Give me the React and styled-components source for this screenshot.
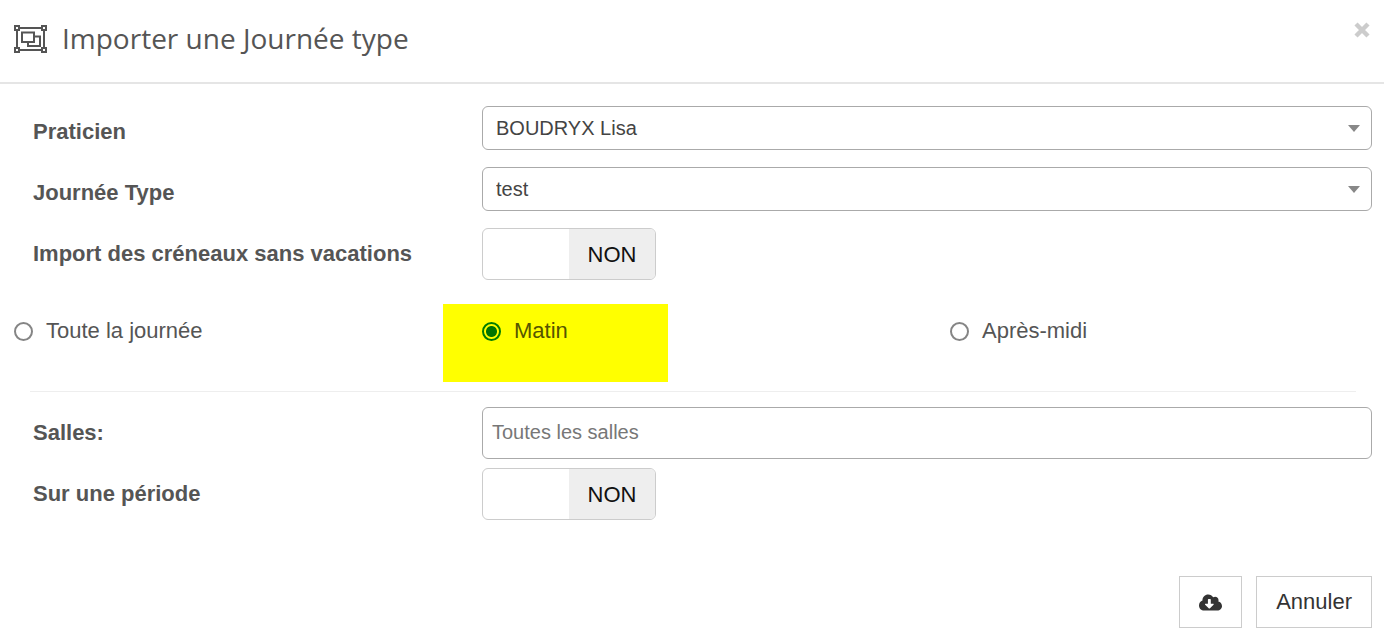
import React, { useState } from "react";
import styled, { createGlobalStyle } from "styled-components";
import { FaCloudDownloadAlt } from "react-icons/fa";

const GlobalStyle = createGlobalStyle`
  *, *::before, *::after { box-sizing: border-box; }
  body {
    margin: 0;
    background: #fff;
    color: #555;
    font: 22px/24px "Liberation Sans", Arial, sans-serif;
  }
  button, input, select { font-family: inherit; }
`;

const Header = styled.header`
  display: flex;
  align-items: flex-start;
  justify-content: space-between;
  padding: 18px 12px 24px 14px;
  border-bottom: 2px solid #e5e5e5;
`;

const Title = styled.h1`
  display: flex;
  align-items: center;
  gap: 15px;
  margin: 0;
  font: 400 28px/40px "Open Sans", sans-serif;

  svg { margin-top: 2px; }
`;

const CloseButton = styled.button`
  display: flex;
  padding: 4px 2px;
  border: 0;
  background: none;
  color: #ccc;
  cursor: pointer;
`;

const Form = styled.form`
  padding: 22px 12px 12px 14px;
`;

const Row = styled.div`
  display: grid;
  grid-template-columns: 468fr 890fr;
  align-items: start;
  margin-bottom: ${(p) => p.$gap}px;
`;

const Label = styled.label`
  padding: 14px 0 0 19px;
  font-weight: 700;
`;

const SelectWrap = styled.div`
  position: relative;

  svg {
    position: absolute;
    top: 19px;
    right: 12px;
    pointer-events: none;
  }
`;

const Select = styled.select`
  display: block;
  appearance: none;
  width: 100%;
  height: 44px;
  padding: 0 36px 0 13px;
  border: 1px solid #aaa;
  border-radius: 6px;
  background: #fff;
  color: #444;
  font-size: 20px;
`;

const TextInput = styled.input`
  width: 100%;
  height: 52px;
  padding: 0 9px 2px;
  border: 1px solid #aaa;
  border-radius: 6px;
  background: #fff;
  color: #444;
  font-size: 20px;

  &::placeholder { color: #777; }
`;

const Switch = styled.label`
  position: relative;
  display: grid;
  grid-template-columns: 1fr 1fr;
  width: 174px;
  height: 52px;
  overflow: hidden;
  border: 1px solid #ccc;
  border-radius: 6px;
  color: #111;
  line-height: 52px;
  text-align: center;
  cursor: pointer;

  input {
    position: absolute;
    inset: 0;
    margin: 0;
    opacity: 0;
  }
`;

const SwitchText = styled.span`
  grid-column: ${(p) => (p.$on ? 1 : 2)};
  background: #eee;
`;

const RadioGroup = styled.div`
  display: grid;
  grid-template-columns: 468fr 468fr 422fr;
`;

const RadioOption = styled.label`
  display: flex;
  align-items: flex-start;
  gap: 13px;
  height: 78px;
  padding-top: 15px;

  &:has(input:checked) {
    width: 225px;
    margin-left: -39px;
    padding-left: 39px;
    background: #ff0;
    color: #550;
  }
`;

const Radio = styled.input`
  appearance: none;
  width: 19px;
  height: 19px;
  margin: 3px 0 0;
  border: 2px solid #858585;
  border-radius: 50%;

  &:checked {
    border-color: #007d00;
    background: radial-gradient(circle, #007500 5px, transparent 6px);
  }
`;

const Divider = styled.hr`
  margin: 9px 16px 15px;
  border: 0;
  border-top: 1px solid #eee;
`;

const Footer = styled.footer`
  display: flex;
  justify-content: flex-end;
  gap: 14px;
  margin-top: 56px;
`;

const Button = styled.button`
  display: flex;
  align-items: center;
  justify-content: center;
  height: 52px;
  padding: 0 19px;
  border: 1px solid #ccc;
  background: #fff;
  color: #333;
  font-size: 22px;
  cursor: pointer;
`;

function ObjectGroupIcon() {
  return (
    <svg width="33" height="28" viewBox="0 0 33 28" fill="none" stroke="currentColor" strokeWidth="2" aria-hidden="true">
      <path d="M6 3H27M6 25H27M3 6V22M30 6V22" />
      <path d="M1 1H5V5H1ZM28 1H32V5H28ZM1 23H5V27H1ZM28 23H32V27H28Z" />
      <path d="M8 7.5H20V17H8ZM20 11.5H26V21H14V17" />
    </svg>
  );
}

function CrossIcon() {
  return (
    <svg width="16" height="16" viewBox="0 0 16 16" stroke="currentColor" strokeWidth="4.4" aria-hidden="true">
      <path d="M2 2L14 14M14 2L2 14" />
    </svg>
  );
}

function SelectField({ id, label, value }) {
  return (
    <Row $gap={17}>
      <Label htmlFor={id}>{label}</Label>
      <SelectWrap>
        <Select id={id} defaultValue={value}>
          <option>{value}</option>
        </Select>
        <svg width="12" height="7" viewBox="0 0 12 7" aria-hidden="true">
          <path d="M0 0H12L6 7Z" fill="#888" />
        </svg>
      </SelectWrap>
    </Row>
  );
}

function SwitchField({ id, label, gap }) {
  const [on, setOn] = useState(false);
  return (
    <Row $gap={gap}>
      <Label htmlFor={id}>{label}</Label>
      <Switch>
        <input id={id} type="checkbox" checked={on} onChange={() => setOn(!on)} />
        <SwitchText $on={on}>{on ? "OUI" : "NON"}</SwitchText>
      </Switch>
    </Row>
  );
}

const periods = ["Toute la journée", "Matin", "Après-midi"];

export default function App() {
  const [period, setPeriod] = useState("Matin");
  return (
    <>
      <GlobalStyle />
      <main>
        <Header>
          <Title>
            <ObjectGroupIcon />
            Importer une Journée type
          </Title>
          <CloseButton type="button" aria-label="Fermer">
            <CrossIcon />
          </CloseButton>
        </Header>
        <Form onSubmit={(e) => e.preventDefault()}>
          <SelectField id="praticien" label="Praticien" value="BOUDRYX Lisa" />
          <SelectField id="journee" label="Journée Type" value="test" />
          <SwitchField id="creneaux" label="Import des créneaux sans vacations" gap={24} />
          <RadioGroup role="radiogroup" aria-label="Période">
            {periods.map((name) => (
              <RadioOption key={name}>
                <Radio type="radio" name="periode" checked={period === name} onChange={() => setPeriod(name)} />
                {name}
              </RadioOption>
            ))}
          </RadioGroup>
          <Divider />
          <Row $gap={9}>
            <Label htmlFor="salles">Salles:</Label>
            <TextInput id="salles" type="text" placeholder="Toutes les salles" />
          </Row>
          <SwitchField id="surperiode" label="Sur une période" gap={0} />
          <Footer>
            <Button type="submit" aria-label="Importer">
              <FaCloudDownloadAlt size={23} />
            </Button>
            <Button type="button">Annuler</Button>
          </Footer>
        </Form>
      </main>
    </>
  );
}
